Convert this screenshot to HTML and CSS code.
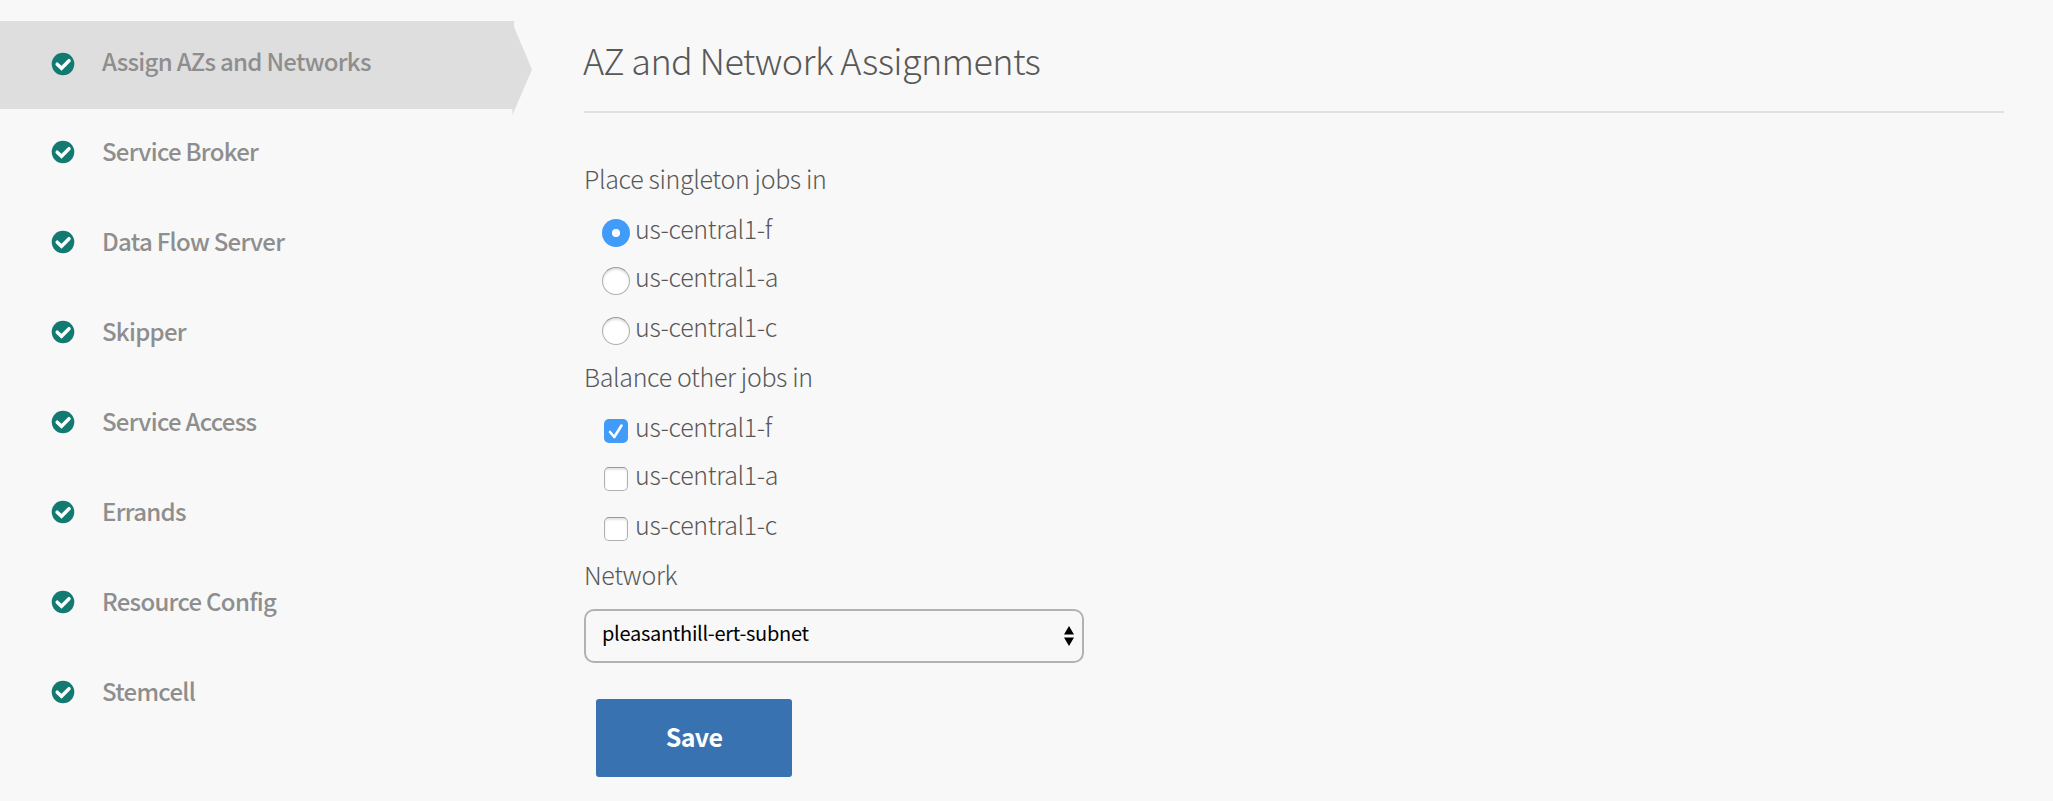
FILE: index.html
```html
<!DOCTYPE html>
<html lang="en">
<head>
<meta charset="utf-8">
<title>AZ and Network Assignments</title>
<link rel="stylesheet" href="styles.css">
</head>
<body>
<svg class="defs" width="0" height="0"><symbol id="ok" viewBox="0 0 24 24"><circle cx="12" cy="12" r="11.300" fill="#127a70"/><path d="M6.200 12.200l4.300 4 7.500-7.500" fill="none" stroke="#fff" stroke-width="3.500" stroke-linecap="round" stroke-linejoin="miter"/></symbol></svg>
<div class="page">
<nav class="sidebar">
<a class="item active"><svg class="ok"><use href="#ok"/></svg><span>Assign AZs and Networks</span><svg class="arrow" viewBox="0 0 20 88"><path d="M2 0L20 42.500L0.400 88V40H2z" fill="#dedede"/></svg></a>
<a class="item"><svg class="ok"><use href="#ok"/></svg><span>Service Broker</span></a>
<a class="item"><svg class="ok"><use href="#ok"/></svg><span>Data Flow Server</span></a>
<a class="item"><svg class="ok"><use href="#ok"/></svg><span>Skipper</span></a>
<a class="item"><svg class="ok"><use href="#ok"/></svg><span>Service Access</span></a>
<a class="item"><svg class="ok"><use href="#ok"/></svg><span>Errands</span></a>
<a class="item"><svg class="ok"><use href="#ok"/></svg><span>Resource Config</span></a>
<a class="item"><svg class="ok"><use href="#ok"/></svg><span>Stemcell</span></a>
</nav>
<main class="content">
<h1 class="title"><span>AZ and Network Assignments</span></h1>
<form class="form">
<div class="row"><span>Place singleton jobs in</span></div>
<label class="row opt"><i class="radio on"></i><span>us-central1-f</span></label>
<label class="row opt short"><i class="radio"></i><span>us-central1-a</span></label>
<label class="row opt"><i class="radio"></i><span>us-central1-c</span></label>
<div class="row"><span>Balance other jobs in</span></div>
<label class="row opt"><i class="check on"><svg viewBox="0 0 24 24"><path d="M6 13l4.300 5L17.500 6.500" fill="none" stroke="#fff" stroke-width="2.600" stroke-linecap="round" stroke-linejoin="round"/></svg></i><span>us-central1-f</span></label>
<label class="row opt short"><i class="check"></i><span>us-central1-a</span></label>
<label class="row opt"><i class="check"></i><span>us-central1-c</span></label>
<div class="row last"><span>Network</span></div>
<div class="select"><span>pleasanthill-ert-subnet</span><svg class="updown" viewBox="0 0 10 20"><path d="M5 0l5 8.500H0zM5 20l5-8.500H0z"/></svg></div>
<button class="save" type="button"><span>Save</span></button>
</form>
</main>
</div>
</body>
</html>
```
FILE: styles.css
```css
* { box-sizing: border-box; }
body {
  margin: 0;
  background: #f8f8f8;
  color: #585858;
  font-family: "Noto Sans CJK SC", "Open Sans", sans-serif;
  font-size: 25px;
  font-weight: 300;
  letter-spacing: -0.35px;
}
.defs { position: absolute; }
.page { display: flex; height: 801px; overflow: hidden; }
.sidebar { width: 514px; padding-top: 21px; flex: none; }
.item {
  position: relative;
  display: flex;
  align-items: flex-start;
  height: 90px;
  padding-left: 51px;
  color: #8e8e8e;
  font-size: 24px;
  font-weight: 500;
  letter-spacing: -0.72px;
  line-height: 80px;
  white-space: nowrap;
}
.item span { padding-top: 1px; }
.item.active { height: 88px; background: #dedede; margin-bottom: 1px; }
.item.active span { padding-top: 0; }
.ok { width: 24px; height: 24px; margin: 30px 27px 0 0; flex: none; }
.item.active .ok { margin-top: 31px; }
.arrow { position: absolute; left: 512px; top: 6px; width: 20px; height: 88px; }
.content { flex: 1; padding: 0 49px 0 70px; }
.title {
  margin: 0;
  height: 113px;
  border-bottom: 2px solid #e1e1e1;
  font-size: 36px;
  font-weight: 300;
  letter-spacing: -0.62px;
  line-height: 118px;
}
.title span { margin-left: -1px; }
.form { padding-top: 40px; display: flex; flex-direction: column; align-items: flex-start; }
.row { display: flex; height: 50px; line-height: 50px; white-space: nowrap; }
.row.short { height: 48px; margin-top: -2px; margin-bottom: 2px; }
.row.last { height: 52px; }
.opt { padding-left: 18px; }
.opt span { margin-left: 5px; }
.radio, .check {
  width: 28px;
  height: 28px;
  margin-top: 16px;
  border: 1px solid #b0b0b0;
  border-top-color: #999;
  border-radius: 50%;
  background: #fff;
  box-shadow: inset 0 2px 2px #e4e4e4;
}
.radio.on {
  border: 0;
  background: radial-gradient(circle, #fff 3.700px, #419bf9 4.500px);
  box-shadow: none;
}
.check { width: 24px; height: 24px; margin: 18px 2px 0; border-radius: 5px; }
.check.on { border: 0; background: #419bf9; box-shadow: none; }
.check svg { display: block; width: 24px; height: 24px; }
.select {
  display: flex;
  justify-content: space-between;
  width: 500px;
  height: 54px;
  margin-top: 8px;
  padding: 0 8px 0 16px;
  border: 2px solid #b2b2b2;
  border-radius: 10px;
  color: #000;
  font-size: 20px;
  font-weight: 400;
  letter-spacing: -0.3px;
  line-height: 43px;
}
.updown { width: 10px; height: 20px; margin-top: 15px; }
.save {
  width: 196px;
  height: 78px;
  margin: 36px 0 0 12px;
  padding: 0;
  border: 0;
  border-radius: 3px;
  background: #3972b0;
  color: #fff;
  font: 700 25px/74px "Noto Sans CJK SC", "Open Sans", sans-serif;
  letter-spacing: -0.6px;
}
.save span { display: block; height: 78px; }
```
